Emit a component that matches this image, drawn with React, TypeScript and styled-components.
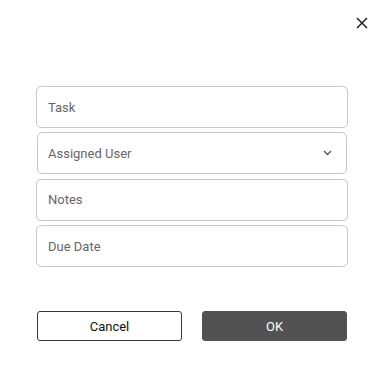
import React from "react";
import styled, { createGlobalStyle } from "styled-components";

const Global = createGlobalStyle`
  html, body { margin: 0; padding: 0; background: #ffffff; }
  * { box-sizing: border-box; }
  body { font-family: Roboto, "Liberation Sans", Arial, sans-serif; }
`;

const Dialog = styled.div`
  width: 380px;
  height: 369px;
  background: #ffffff;
  display: flex;
  flex-direction: column;
`;

const Header = styled.div`
  display: flex;
  justify-content: flex-end;
  padding: 16px 11px 0 0;
`;

const CloseButton = styled.button`
  width: 14px;
  height: 14px;
  padding: 0;
  border: none;
  background: transparent;
  display: flex;
  align-items: center;
  justify-content: center;
  cursor: pointer;
  color: #222222;
`;

const Form = styled.div`
  display: flex;
  flex-direction: column;
  gap: 4.4px;
  margin: 56px 32px 0 36px;
`;

const Field = styled.div<{ $inset?: boolean }>`
  height: 42px;
  margin: 0 ${(p) => (p.$inset ? "1px" : "0")};
  border: 1px solid #c6c6c6;
  border-radius: 5px;
  display: flex;
  align-items: center;
  justify-content: space-between;
  padding: 0 14px 0 ${(p) => (p.$inset ? "10px" : "11px")};
  font-size: 13px;
  color: #666666;
`;

const Chevron = styled.svg`
  width: 9px;
  height: 6px;
  color: #555555;
`;

const Actions = styled.div`
  display: flex;
  gap: 20px;
  margin: 44px 33px 0 37px;
`;

const Button = styled.button<{ $primary?: boolean }>`
  flex: 1;
  height: 30px;
  border-radius: 3px;
  font-family: Roboto, "Liberation Sans", Arial, sans-serif;
  font-size: 13px;
  cursor: pointer;
  border: 1px solid ${(p) => (p.$primary ? "#525252" : "#3a3a3a")};
  background: ${(p) => (p.$primary ? "#525252" : "#ffffff")};
  color: ${(p) => (p.$primary ? "#ffffff" : "#111111")};
`;

export default function App() {
  return (
    <>
      <Global />
      <Dialog>
        <Header>
          <CloseButton aria-label="Close">
            <svg width="12" height="12" viewBox="0 0 12 12">
              <path d="M1 1 L11 11 M11 1 L1 11" stroke="currentColor" strokeWidth="1.5" fill="none" />
            </svg>
          </CloseButton>
        </Header>
        <Form>
          <Field>Task</Field>
          <Field $inset>
            <span>Assigned User</span>
            <Chevron viewBox="0 0 9 6">
              <path d="M1 1 L4.5 4.5 L8 1" stroke="currentColor" strokeWidth="1.4" fill="none" />
            </Chevron>
          </Field>
          <Field>Notes</Field>
          <Field>Due Date</Field>
        </Form>
        <Actions>
          <Button>Cancel</Button>
          <Button $primary>OK</Button>
        </Actions>
      </Dialog>
    </>
  );
}
